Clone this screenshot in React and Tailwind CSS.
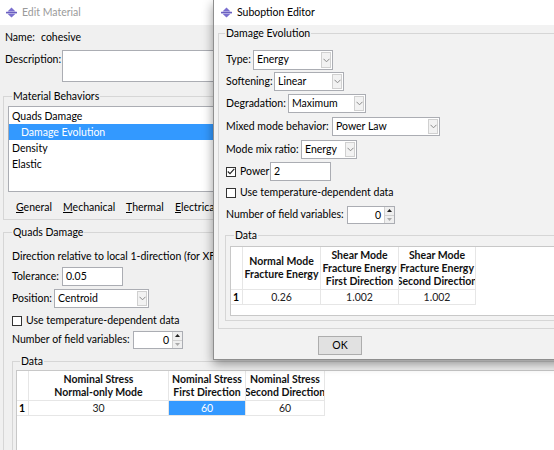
const AppIcon = () => (
  <svg width="11" height="11" viewBox="0 0 11 11">
    <path d="M5.5 0.5 L9.5 4.5 H1.5 Z" fill="#7a6fcf" />
    <rect x="0" y="4.8" width="11" height="1.6" fill="#6a5fc0" />
    <path d="M1.5 6.7 H9.5 L5.5 10.5 Z" fill="#7a6fcf" />
  </svg>
);

const Chevron = () => (
  <svg width="7" height="5" viewBox="0 0 7 5">
    <path d="M0.5 0.8 L3.5 3.8 L6.5 0.8" fill="none" stroke="#8a8a8a" strokeWidth="1" />
  </svg>
);

function Select({ value, className }) {
  return (
    <div className={`flex h-[19px] shrink-0 border border-[#abadb3] bg-white ${className}`}>
      <span className="flex-1 truncate pl-[3px] leading-[17px]">{value}</span>
      <span className="m-px flex w-[10px] items-center justify-center border border-[#d0d0d0] bg-[#f2f2f2]">
        <Chevron />
      </span>
    </div>
  );
}

function TextBox({ value, className }) {
  return (
    <div className={`h-[19px] shrink-0 border border-[#abadb3] bg-white pl-[3px] leading-[17px] ${className}`}>
      {value}
    </div>
  );
}

function Spin({ value, className }) {
  return (
    <div className={`flex h-[18px] shrink-0 border border-[#abadb3] bg-white ${className}`}>
      <span className="flex-1 pr-[3px] text-right leading-[16px]">{value}</span>
      <span className="flex w-[10px] flex-col border-l border-[#d0d0d0] bg-[#efefef]">
        <span className="flex flex-1 items-center justify-center border-b border-[#d0d0d0]">
          <svg width="5" height="3" viewBox="0 0 5 3"><path d="M0 3 L2.5 0 L5 3Z" fill="#222" /></svg>
        </span>
        <span className="flex flex-1 items-center justify-center">
          <svg width="5" height="3" viewBox="0 0 5 3"><path d="M0 0 L2.5 3 L5 0Z" fill="#aaa" /></svg>
        </span>
      </span>
    </div>
  );
}

function Check({ checked }) {
  return (
    <span className="flex h-[10px] w-[10px] shrink-0 items-center justify-center border border-[#333] bg-white">
      {checked && (
        <svg width="8" height="7" viewBox="0 0 8 7">
          <path d="M0.8 3.5 L3 5.7 L7.3 0.8" fill="none" stroke="#222" strokeWidth="1.1" />
        </svg>
      )}
    </span>
  );
}

function Group({ title, className, legendClass, children }) {
  return (
    <fieldset className={`min-w-0 border border-[#d6d6d6] ${className}`}>
      <legend className={`px-[1px] leading-[16px] ${legendClass}`}>{title}</legend>
      {children}
    </fieldset>
  );
}

// header cell: each line stays on one row and gets clipped evenly at both sides
function HeadCell({ lines, className }) {
  return (
    <div className={`flex flex-col items-center justify-center overflow-hidden border-r border-b border-[#e6e6e6] font-bold leading-[13px] text-[#111] ${className}`}>
      {lines.map((l) => (
        <span key={l} className="whitespace-nowrap">{l}</span>
      ))}
    </div>
  );
}

function Cell({ value, selected }) {
  return (
    <div
      className={`border-r border-b border-[#e6e6e6] text-center leading-[14px] ${
        selected ? "bg-[#3399ff] text-white" : "text-[#222]"
      }`}
    >
      {value}
    </div>
  );
}

function Label({ className, children }) {
  return <span className={`shrink-0 ${className}`}>{children}</span>;
}

function EditMaterial() {
  return (
    <div className="flex h-[450px] w-[620px] flex-col">
      <div className="flex h-[25px] shrink-0 items-center gap-[5px] bg-white pl-[6px] text-[#9a9a9a]">
        <AppIcon />
        <span>Edit Material</span>
      </div>

      <div className="flex flex-col px-[3px]">
        <div className="mt-[4px] flex h-[16px] items-center pl-[2px] leading-[16px]">
          <Label className="w-[36px]">Name:</Label>
          <span>cohesive</span>
        </div>

        <div className="mt-[5px] flex items-start pl-[2px]">
          <Label className="w-[57px] pt-[1px] leading-[16px]">Description:</Label>
          <div className="h-[32px] flex-1 border border-[#abadb3] bg-white" />
        </div>

        <Group title="Material Behaviors" className="mt-[6px] px-[4px] pb-[4px]" legendClass="ml-[4px]">
          <div className="mt-[2px] h-[86px] border border-[#abadb3] bg-white pt-px">
            <div className="h-[16px] pl-[3px] leading-[16px]">Quads Damage</div>
            <div className="h-[16px] bg-[#3399ff] pl-[12px] leading-[16px] text-white">Damage Evolution</div>
            <div className="h-[16px] pl-[3px] leading-[16px]">Density</div>
            <div className="h-[16px] pl-[3px] leading-[16px]">Elastic</div>
          </div>
          <div className="mt-[7px] flex h-[16px] pl-[8px] leading-[16px]">
            <Label className="w-[47px]"><u>G</u>eneral</Label>
            <Label className="w-[63px]"><u>M</u>echanical</Label>
            <Label className="w-[49px]"><u>T</u>hermal</Label>
            <Label><u>E</u>lectrical</Label>
          </div>
        </Group>

        <Group title="Quads Damage" className="mt-[4px] pl-[8px]" legendClass="ml-[0px]">
          <div className="mt-[8px] h-[16px] leading-[16px]">
            Direction relative to local 1-direction (for XFEM)
          </div>
          <div className="mt-[3px] flex items-center">
            <Label className="w-[50px]">Tolerance:</Label>
            <TextBox value="0.05" className="w-[61px]" />
          </div>
          <div className="mt-[3px] flex items-center">
            <Label className="w-[42px]">Position:</Label>
            <Select value="Centroid" className="w-[95px]" />
          </div>
          <div className="mt-[5px] flex h-[16px] items-center gap-[4px]">
            <Check />
            <span>Use temperature-dependent data</span>
          </div>
          <div className="mt-[2px] flex items-center">
            <Label className="w-[121px]">Number of field variables:</Label>
            <Spin value="0" className="w-[50px]" />
          </div>

          <Group title="Data" className="mt-[4px] pl-[3px]" legendClass="ml-[4px]">
            <div className="mt-[1px] h-[100px] border-t border-l border-[#c8c8c8] bg-white">
              <div className="grid grid-cols-[12px_140px_77px_79px] grid-rows-[30px_15px]">
                <HeadCell lines={[]} />
                <HeadCell lines={["Nominal Stress", "Normal-only Mode"]} />
                <HeadCell lines={["Nominal Stress", "First Direction"]} />
                <HeadCell lines={["Nominal Stress", "Second Direction"]} />
                <div className="border-r border-b border-[#e6e6e6] pl-[2px] font-bold leading-[14px]">1</div>
                <Cell value="30" />
                <Cell value="60" selected />
                <Cell value="60" />
              </div>
            </div>
          </Group>
        </Group>
      </div>
    </div>
  );
}

function SuboptionEditor() {
  return (
    <div className="absolute top-0 left-[213px] flex h-[360px] w-[360px] flex-col border-b border-l border-[#8e8e8e] bg-[#f2f2f2] shadow-[0_4px_10px_rgba(0,0,0,0.4)]">
      <div className="flex h-[25px] shrink-0 items-center gap-[5px] bg-white pl-[7px]">
        <AppIcon />
        <span>Suboption Editor</span>
      </div>

      <div className="flex flex-col pl-[4px]">
        <Group title="Damage Evolution" className="pl-[7px] pb-[7px]" legendClass="ml-[-1px]">
          <div className="mt-[9px] flex items-center">
            <Label className="w-[27px]">Type:</Label>
            <Select value="Energy" className="h-[20px] w-[80px]" />
          </div>
          <div className="mt-[2px] flex items-center">
            <Label className="w-[48px]">Softening:</Label>
            <Select value="Linear" className="w-[70px]" />
          </div>
          <div className="mt-[3px] flex items-center">
            <Label className="w-[62px]">Degradation:</Label>
            <Select value="Maximum" className="w-[78px]" />
          </div>
          <div className="mt-[4px] flex items-center">
            <Label className="w-[106px]">Mixed mode behavior:</Label>
            <Select value="Power Law" className="w-[108px]" />
          </div>
          <div className="mt-[4px] flex items-center">
            <Label className="w-[75px]">Mode mix ratio:</Label>
            <Select value="Energy" className="w-[56px]" />
          </div>
          <div className="mt-[3px] flex items-center">
            <span className="flex w-[44px] shrink-0 items-center gap-[4px]">
              <Check checked />
              <span>Power</span>
            </span>
            <TextBox value="2" className="w-[61px]" />
          </div>
          <div className="mt-[4px] flex h-[16px] items-center gap-[4px]">
            <Check />
            <span>Use temperature-dependent data</span>
          </div>
          <div className="mt-[5px] flex items-center">
            <Label className="w-[121px]">Number of field variables:</Label>
            <Spin value="0" className="w-[48px]" />
          </div>

          <Group title="Data" className="mt-[3px] ml-[-1px] px-[4px] pb-[4px]" legendClass="ml-[4px]">
            <div className="mt-[3px] h-[70px] border border-[#c8c8c8] bg-white">
              <div className="grid grid-cols-[12px_78px_78px_77px] grid-rows-[43px_15px]">
                <HeadCell lines={[]} />
                <HeadCell lines={["Normal Mode", "Fracture Energy"]} />
                <HeadCell lines={["Shear Mode", "Fracture Energy", "First Direction"]} />
                <HeadCell lines={["Shear Mode", "Fracture Energy", "Second Direction"]} />
                <div className="border-r border-b border-[#e6e6e6] pl-[2px] font-bold leading-[14px]">1</div>
                <Cell value="0.26" />
                <Cell value="1.002" />
                <Cell value="1.002" />
              </div>
            </div>
          </Group>
        </Group>

        <div className="mt-[7px] ml-[100px] h-[19px] w-[44px] border border-[#adadad] bg-[#e1e1e1] text-center leading-[17px]">
          OK
        </div>
      </div>
    </div>
  );
}

export default function App() {
  return (
    <div className="relative h-[450px] w-[554px] overflow-hidden whitespace-nowrap bg-[#f0f0f0] font-[Lato,sans-serif] text-[10.5px] text-black">
      <EditMaterial />
      <SuboptionEditor />
    </div>
  );
}
